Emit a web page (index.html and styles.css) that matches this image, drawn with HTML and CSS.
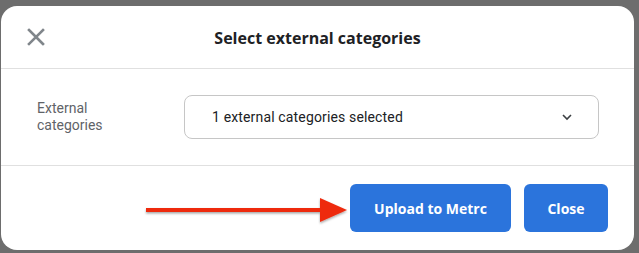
FILE: index.html
```html
<!DOCTYPE html>
<html>
<head>
<meta charset="utf-8">
<link rel="stylesheet" href="styles.css">
</head>
<body>
<div class="dialog">
  <div class="header">
    <button class="close-x" aria-label="Close">
      <svg width="18" height="18" viewBox="0 0 18 18"><path d="M2 2 L16 16 M16 2 L2 16" stroke="#80868b" stroke-width="2.6" stroke-linecap="square" fill="none"/></svg>
    </button>
    <h1 class="title">Select external categories</h1>
  </div>
  <div class="content">
    <div class="label">External<br>categories</div>
    <div class="select">
      <span class="select-text">1 external categories selected</span>
      <svg class="chev" width="12" height="8" viewBox="0 0 12 8"><path d="M2 2 L6 6 L10 2" stroke="#3c4043" stroke-width="1.6" fill="none"/></svg>
    </div>
  </div>
  <div class="footer">
    <button class="btn btn-upload">Upload to Metrc</button>
    <button class="btn btn-close">Close</button>
  </div>
  <svg class="arrow" width="210" height="30" viewBox="0 0 210 30">
    <defs><filter id="sh" x="-10%" y="-50%" width="120%" height="200%"><feDropShadow dx="0" dy="1.5" stdDeviation="1.2" flood-color="#000" flood-opacity="0.35"/></filter></defs>
    <g filter="url(#sh)">
      <rect x="2" y="12" width="178" height="4" fill="#ee2a0e"/>
      <polygon points="176,2 203,14 176,26" fill="#ee2a0e"/>
    </g>
  </svg>
</div>
</body>
</html>
```
FILE: styles.css
```css
html, body { margin: 0; padding: 0; }
body {
  background: #6d6d6d;
  width: 639px;
  height: 253px;
  padding: 6px 0 0 1px;
  box-sizing: border-box;
  font-family: Roboto, "Liberation Sans", sans-serif;
}
.dialog {
  position: relative;
  width: 633px;
  height: 244px;
  background: #fff;
  border-radius: 16px;
  display: flex;
  flex-direction: column;
}
.header {
  height: 62px;
  border-bottom: 1px solid #e0e0e0;
  display: flex;
  align-items: center;
  justify-content: center;
  position: relative;
}
.close-x {
  position: absolute;
  left: 26px;
  top: 22px;
  border: 0;
  background: none;
  padding: 0;
  width: 18px;
  height: 18px;
  display: flex;
}
.title {
  margin: 0;
  font-family: "Open Sans", Roboto, sans-serif;
  font-size: 16px;
  font-weight: 700;
  color: #202124;
  padding-top: 1px;
}
.content {
  height: 96px;
  border-bottom: 1px solid #e0e0e0;
  display: flex;
  align-items: center;
  padding: 0 35px 0 36px;
}
.label {
  width: 147px;
  font-size: 14px;
  line-height: 17px;
  color: #5f6368;
}
.select {
  flex: 1;
  height: 44px;
  box-sizing: border-box;
  border: 1px solid #c6c6c6;
  border-radius: 8px;
  display: flex;
  align-items: center;
  justify-content: space-between;
  padding: 0 25px 0 27px;
}
.select-text {
  font-size: 14px;
  color: #202124;
  letter-spacing: 0.15px;
}
.footer {
  flex: 1;
  display: flex;
  justify-content: flex-end;
  align-items: flex-start;
  gap: 13px;
  padding: 18px 26px 0 0;
}
.btn {
  height: 48px;
  padding: 0;
  border: 0;
  border-radius: 6px;
  background: #2b74dc;
  color: #fff;
  font-family: "Open Sans", Roboto, sans-serif;
  font-size: 14px;
  font-weight: 700;
}
.btn-upload { width: 161px; }
.btn-close { width: 84px; }
.arrow {
  position: absolute;
  left: 143px;
  top: 190px;
}
```
